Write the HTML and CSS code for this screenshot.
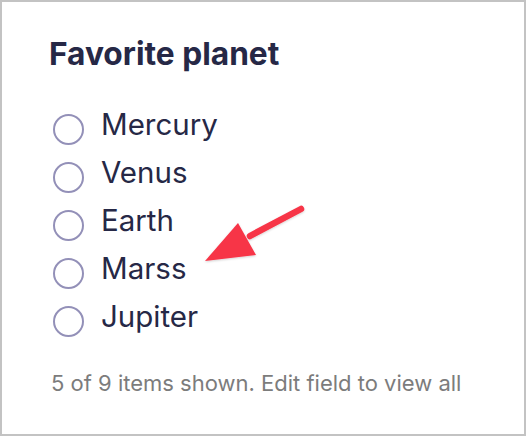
FILE: index.html
```html
<!DOCTYPE html>
<html>
<head>
<meta charset="utf-8">
<link rel="stylesheet" href="styles.css">
</head>
<body>
<div class="card">
  <h1 class="title">Favorite planet</h1>
  <ul class="options">
    <li class="option"><span class="radio"></span><span class="label">Mercury</span></li>
    <li class="option"><span class="radio"></span><span class="label">Venus</span></li>
    <li class="option"><span class="radio"></span><span class="label">Earth</span></li>
    <li class="option"><span class="radio"></span><span class="label">Marss</span></li>
    <li class="option"><span class="radio"></span><span class="label">Jupiter</span></li>
  </ul>
  <p class="note">5 of 9 items shown. Edit field to view all</p>
  <svg class="arrow" width="140" height="90" viewBox="0 0 140 90">
    <defs>
      <filter id="sh" x="-20%" y="-20%" width="140%" height="140%">
        <feDropShadow dx="0" dy="1" stdDeviation="1.2" flood-color="#000" flood-opacity="0.18"/>
      </filter>
    </defs>
    <g filter="url(#sh)">
      <line x1="99" y1="10" x2="48" y2="37" stroke="#f73447" stroke-width="6.5" stroke-linecap="round"/>
      <polygon points="3,62 36,24 54,56" fill="#f73447"/>
    </g>
  </svg>
</div>
</body>
</html>
```
FILE: styles.css
```css
html, body {
  margin: 0;
  padding: 0;
  background: #ffffff;
}
.card {
  position: relative;
  box-sizing: border-box;
  width: 526px;
  height: 436px;
  border: 2px solid #c3c3c3;
  padding: 33px 0 0 47px;
  font-family: Inter, "Noto Sans", sans-serif;
  color: #262846;
}
.title {
  margin: 0;
  font-size: 31.7px;
  line-height: 38px;
  font-weight: 700;
  letter-spacing: 0;
}
.options {
  list-style: none;
  margin: 32px 0 0 0;
  padding: 0;
}
.option {
  display: flex;
  align-items: center;
  height: 48px;
}
.radio {
  box-sizing: border-box;
  width: 31px;
  height: 31px;
  margin-left: 4px;
  border: 2px solid #9390b8;
  border-radius: 50%;
}
.label {
  margin-left: 17px;
  font-size: 29.5px;
  line-height: 36px;
  margin-bottom: 10px;
}
.note {
  margin: 24px 0 0 2px;
  font-size: 22px;
  line-height: 28px;
  color: #7c7c7c;
}
.arrow {
  position: absolute;
  left: 200px;
  top: 197px;
}
```
